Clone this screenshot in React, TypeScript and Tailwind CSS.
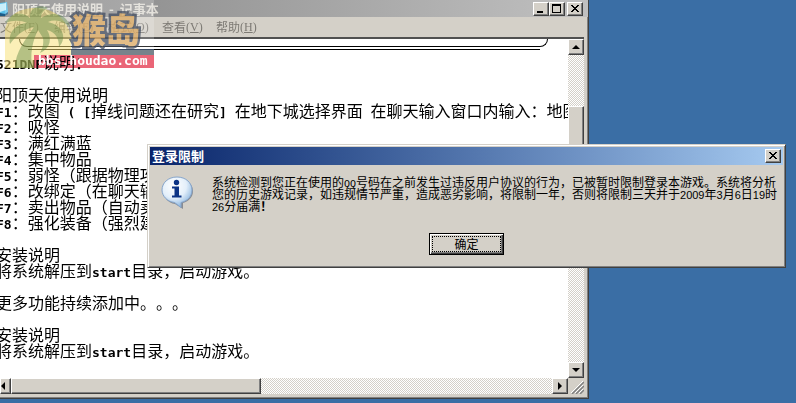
import type { ReactNode } from "react";

const raised =
  "border border-t-white border-l-white border-r-[#404040] border-b-[#404040] bg-[#d4d0c8] shadow-[inset_-1px_-1px_0_#808080]";

const dither =
  "bg-[repeating-conic-gradient(#ffffff_0_25%,#d4d0c8_0_50%)] bg-[length:2px_2px]";

const menus = [
  { label: "文件", key: "F" },
  { label: "编辑", key: "E" },
  { label: "格式", key: "O" },
  { label: "查看", key: "V" },
  { label: "帮助", key: "H" },
];

function A({ children }: { children: ReactNode }) {
  return (
    <span className="font-['DejaVu_Sans_Mono',monospace] text-[13px] leading-[0px] font-bold">
      {children}
    </span>
  );
}

const lines: ReactNode[] = [
  <><A>521DNF</A>说明：</>,
  "",
  "阳顶天使用说明",
  <><A>F1</A>：改图<A>{" ( "}</A><A>[</A>掉线问题还在研究<A>{"] "}</A>在地下城选择界面<A> </A>在聊天输入窗口内输入：地图</>,
  <><A>F2</A>：吸怪</>,
  <><A>F3</A>：满红满蓝</>,
  <><A>F4</A>：集中物品</>,
  <><A>F5</A>：弱怪（跟据物理攻</>,
  <><A>F6</A>：改绑定（在聊天输</>,
  <><A>F7</A>：卖出物品（自动卖</>,
  <><A>F8</A>：强化装备（强烈建</>,
  "",
  "安装说明",
  <>将系统解压到<A>start</A>目录，启动游戏。</>,
  "",
  "更多功能持续添加中。。。",
  "",
  "安装说明",
  <>将系统解压到<A>start</A>目录，启动游戏。</>,
];

function Caption({ label, kind }: { label: string; kind: "min" | "max" | "close" }) {
  return (
    <button aria-label={label} className={`flex h-3.5 w-4 items-center justify-center ${raised}`}>
      <svg width="12" height="10" viewBox="0 0 12 10" shapeRendering="crispEdges" aria-hidden="true">
        {kind === "min" && <path d="M2 7h6v2H2z" fill="#000" />}
        {kind === "max" && <path d="M1 0h9v9H1zM2 2v6h7V2z" fill="#000" fillRule="evenodd" />}
        {kind === "close" && (
          <path
            d="M2 1h2v1h1v1h2V2h1V1h2v1H9v1H8v1H7v1h1v1h1v1h1v1H8V7H7V6H5v1H4v1H2V7h1V6h1V5h1V4H4V3H3V2H2z"
            fill="#000"
          />
        )}
      </svg>
    </button>
  );
}

function Arrow({ label, d }: { label: string; d: string }) {
  return (
    <button aria-label={label} className={`flex size-4 shrink-0 items-center justify-center ${raised}`}>
      <svg width="10" height="10" viewBox="0 0 10 10" aria-hidden="true">
        <path d={d} fill="#000" />
      </svg>
    </button>
  );
}

function Watermark() {
  return (
    <div aria-hidden="true" className="pointer-events-none absolute top-0 left-0 h-[70px] w-[156px]">
      <svg className="absolute inset-0" width="156" height="70" viewBox="0 0 156 70">
        <path d="M5 0H154V55H34V68H5z" fill="#fff" opacity=".2" />
        <path d="M5 68V30C8 14 20 8 36 8C56 8 69 22 71 38V50H154V55H34V68z" fill="#f5d84a" opacity=".4" />
        <path d="M71 49H154V55H71z" fill="#3f5678" opacity=".7" />
        <path
          d="M34 27C26 39 15 52 15 68H33C29 55 33 40 38 30L43 38C44 45 42 49 40 53C51 48 52 38 47 30C56 32 59 39 59 47C68 37 62 25 48 22C55 19 63 21 70 27C67 13 52 11 41 18C41 13 44 10 48 8C37 3 29 9 30 18C22 11 11 12 5 23C13 20 21 20 27 23C15 24 8 33 10 44C16 36 23 29 34 27z"
          fill="#54813f"
          opacity=".42"
        />
      </svg>
      <div className="absolute top-[55px] right-0.5 left-[34px] h-[13px] bg-[#ea6577] mix-blend-multiply" />
      <div className="absolute top-1.5 left-[72px] font-['Noto_Sans_CJK_SC',sans-serif] text-[34px] leading-[46px] font-black whitespace-nowrap text-[#dba85f] opacity-75 [-webkit-text-stroke:5px_#414b5e] [paint-order:stroke_fill]">
        猴岛
      </div>
      <div className="absolute top-[54px] left-[38px] font-['DejaVu_Sans_Mono',monospace] text-[13px] leading-[14px] font-bold whitespace-nowrap text-white">
        bbs.houdao.com
      </div>
    </div>
  );
}

function Notepad() {
  return (
    <section className="relative flex h-[calc(100vh-4px)] w-[calc(100%-207px)] flex-col border-r border-b border-[#404040] bg-[#d4d0c8] pr-1 pb-1 shadow-[inset_-1px_-1px_0_#808080]">
      <header className="-mr-1 flex h-[17px] shrink-0 items-center bg-linear-to-r from-[#858585] to-[#c0c0c0] pr-[5px]">
        <svg width="9" height="15" viewBox="0 0 9 15" aria-hidden="true">
          <path d="M0 2L7 1L8 11L5 14H0z" fill="#58bde8" />
          <path d="M0 3L6 2L6 9L0 11z" fill="#c9eefa" />
          <path d="M0 12L5 13L8 11V13L5 15H0z" fill="#1c5a86" />
        </svg>
        <h1 className="ml-[3px] flex-1 text-[13px] leading-4 font-bold whitespace-pre text-[#dedbd4]">
          阳顶天使用说明{"  -  "}记事本
        </h1>
        <Caption label="最小化" kind="min" />
        <Caption label="最大化" kind="max" />
        <span className="w-0.5" />
        <Caption label="关闭" kind="close" />
      </header>
      <nav className="-mr-1 flex h-5 shrink-0 items-center gap-3 text-[12px] text-[#7d7a74]">
        {menus.map((m) => (
          <button key={m.key} className="flex w-[42px] items-center whitespace-nowrap">
            {m.label}
            <span className="font-['Liberation_Serif',serif]">
              (<u>{m.key}</u>)
            </span>
          </button>
        ))}
      </nav>
      <div className="flex min-h-0 flex-1 border-t-2 border-t-[#505050]">
        <div
          role="textbox"
          aria-multiline="true"
          aria-label="文本编辑区"
          className="min-w-0 flex-1 overflow-hidden bg-white text-[16px] leading-4 whitespace-pre text-black"
        >
          <div className="h-[15px]">
            <div className="mr-5 ml-[19px] h-2 rounded-b-[8px] border border-t-0 border-black" />
            <div className="mt-0.5 mr-7 ml-7 h-px bg-black" />
          </div>
          {lines.map((line, i) => (
            <p key={i} className="-ml-1 h-4">
              {line}
            </p>
          ))}
        </div>
        <div className={`flex w-4 shrink-0 flex-col ${dither}`}>
          <Arrow label="向上滚动" d="M1 7L5 3L9 7z" />
          <div className="h-[15%] shrink-0" />
          <div className={`h-[22%] ${raised}`} />
          <div className="flex-1" />
          <Arrow label="向下滚动" d="M1 3L5 7L9 3z" />
        </div>
      </div>
      <div className="flex h-4 shrink-0">
        <div className={`flex flex-1 ${dither}`}>
          <button aria-label="向左滚动" className={`flex w-[11px] items-center ${raised}`}>
            <svg width="6" height="10" viewBox="0 0 6 10" aria-hidden="true">
              <path d="M4 1L0 5L4 9z" fill="#000" />
            </svg>
          </button>
          <div className={`w-[44%] ${raised}`} />
          <div className="flex-1" />
          <Arrow label="向右滚动" d="M3 1L7 5L3 9z" />
        </div>
        <svg width="16" height="16" viewBox="0 0 16 16" aria-hidden="true">
          <path d="M4 16L16 4M8 16L16 8M12 16L16 12" stroke="#808080" strokeWidth="1.5" />
          <path d="M3 15L15 3M7 15L15 7M11 15L15 11" stroke="#fff" />
        </svg>
      </div>
      <Watermark />
    </section>
  );
}

function N({ children }: { children: ReactNode }) {
  return (
    <span className="font-['Liberation_Sans',sans-serif] text-[11px] leading-[0px]">{children}</span>
  );
}

function InfoIcon() {
  return (
    <svg className="mt-[11px] ml-[11px] shrink-0" width="33" height="34" viewBox="0 0 33 34" aria-hidden="true">
      <defs>
        <radialGradient id="bubble" cx="40%" cy="28%" r="75%">
          <stop offset="0" stopColor="#fff" />
          <stop offset=".55" stopColor="#e3effa" />
          <stop offset="1" stopColor="#82afdb" />
        </radialGradient>
      </defs>
      <path d="M17 3C26 3 32 8 32 15C32 21 28 25 22 27V33L14 28C7 27 3 22 3 16C3 8 9 3 17 3z" fill="#6e7480" opacity=".75" />
      <path
        d="M16 1C25 1 31 7 31 14C31 20 27 25 20 26.500L20 31.500L13.500 26.500C6 25.500 1 20 1 14C1 7 7 1 16 1z"
        fill="url(#bubble)"
        stroke="#86a5cb"
      />
      <circle cx="15.500" cy="6.500" r="2.700" fill="#0b3385" />
      <path d="M11 10.500H18V19.500H20.500V21.500H11V19.500H13.500V12.500H11z" fill="#0b3385" />
    </svg>
  );
}

function Dialog() {
  return (
    <div
      role="dialog"
      aria-labelledby="dialog-title"
      className="absolute top-36 right-[10px] left-[147px] flex h-[124px] flex-col border border-t-[#d4d0c8] border-l-[#d4d0c8] border-r-[#404040] border-b-[#404040] bg-[#d4d0c8] p-0.5 shadow-[inset_1px_1px_0_#fff,inset_-1px_-1px_0_#808080]"
    >
      <header className="flex h-[18px] shrink-0 items-center bg-linear-to-r from-[#0a246a] to-[#a6caf0] pr-0.5 pl-0.5">
        <h2 id="dialog-title" className="flex-1 text-[13px] leading-4 font-bold text-white">
          登录限制
        </h2>
        <Caption label="关闭" kind="close" />
      </header>
      <div className="flex">
        <InfoIcon />
        <p className="mt-[11px] ml-[18px] text-[12px] leading-3 whitespace-nowrap text-black">
          系统检测到您正在使用的
          <span className="font-['Liberation_Mono',monospace] text-[10px] leading-[0px]">QQ</span>
          号码在之前发生过违反用户协议的行为，已被暂时限制登录本游戏。系统将分析
          <br />
          您的历史游戏记录，如违规情节严重，造成恶劣影响，将限制一年，否则将限制三天并于<N>2009</N>年<N>3</N>月<N>6</N>日<N>19</N>时
          <br />
          <N>26</N>分届满<b>！</b>
        </p>
      </div>
      <button className="mx-auto mt-auto mb-2.5 h-[22px] w-[75px] border border-black bg-[#d4d0c8] p-0.5 text-[12px] leading-3 text-black shadow-[inset_1px_1px_0_#fff,inset_-1px_-1px_0_#404040,inset_-2px_-2px_0_#808080]">
        <span className="flex h-full items-center justify-center border border-dotted border-black">
          确定
        </span>
      </button>
    </div>
  );
}

export default function App() {
  return (
    <main className="relative min-h-screen overflow-hidden bg-[#3a6ea5] font-['Noto_Sans_CJK_SC',sans-serif] [text-spacing-trim:space-all]">
      <Notepad />
      <Dialog />
    </main>
  );
}
